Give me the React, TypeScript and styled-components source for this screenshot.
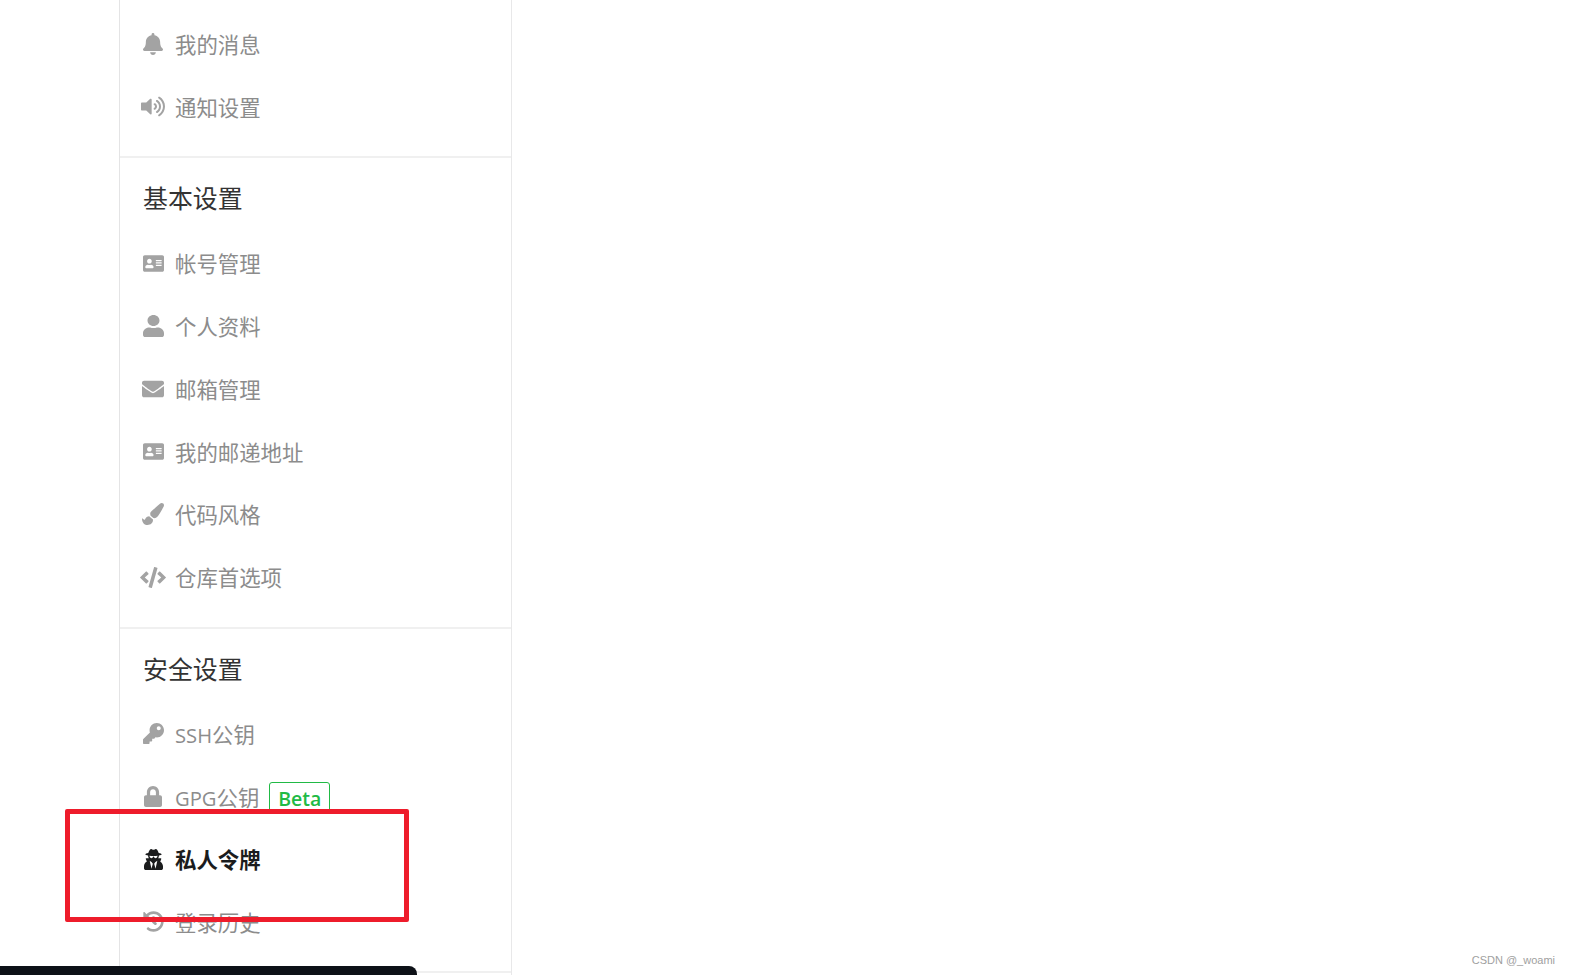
import React from "react";
import styled, { createGlobalStyle } from "styled-components";
import {
  FaBell,
  FaVolumeUp,
  FaAddressCard,
  FaUser,
  FaEnvelope,
  FaPaintBrush,
  FaCode,
  FaKey,
  FaLock,
  FaUserSecret,
  FaHistory,
} from "react-icons/fa";
import type { IconType } from "react-icons";

const GlobalStyle = createGlobalStyle`
  html, body {
    margin: 0;
    padding: 0;
    background: #fff;
    width: 1570px;
    height: 975px;
    overflow: hidden;
    font-family: "Open Sans", "Noto Sans CJK SC", sans-serif;
  }
`;

const Page = styled.div`
  position: relative;
  width: 1570px;
  height: 975px;
  overflow: hidden;
  padding-left: 119px;
  box-sizing: border-box;
  background: #fff;
`;

const Sidebar = styled.nav`
  width: 393px;
  height: 975px;
  box-sizing: border-box;
  border-left: 1px solid #e4e4e5;
  border-right: 1px solid #e8e8e9;
  padding-top: 13.6px;
`;

const Section = styled.section`
  border-bottom: 2px solid #f0f0f0;
  padding-bottom: 17px;
`;

const Heading = styled.h3`
  margin: 22px 0 18.6px 23px;
  font-family: "Noto Sans CJK SC", sans-serif;
  font-size: 24.9px;
  font-weight: 400;
  line-height: 34px;
  color: #333;
`;

const Row = styled.div<{ $active?: boolean }>`
  display: flex;
  align-items: center;
  box-sizing: border-box;
  height: 62.8px;
  padding: 0 0 2px 23px;
  color: ${(p) => (p.$active ? "#1b1c1d" : "#8c8c8c")};
`;

const IconBox = styled.span<{ $active?: boolean; $w: number; $h: number }>`
  display: flex;
  align-items: center;
  justify-content: center;
  width: 20px;
  margin-right: 12px;
  color: ${(p) => (p.$active ? "#1b1c1d" : "#a3a3a3")};

  svg {
    flex-shrink: 0;
    width: ${(p) => p.$w}px;
    height: ${(p) => p.$h}px;
  }
`;

const Label = styled.span<{ $active?: boolean; $latin?: boolean }>`
  font-family: "Noto Sans CJK SC", sans-serif;
  font-size: 21.4px;
  font-weight: ${(p) => (p.$active ? 700 : 400)};
  line-height: 30px;
  padding-top: ${(p) => (p.$latin ? "2px" : "0")};
  white-space: nowrap;
`;

const Latin = styled.span`
  font-family: "Open Sans", sans-serif;
  font-size: 20.2px;
`;

const Badge = styled.span`
  display: inline-flex;
  align-items: center;
  justify-content: center;
  box-sizing: border-box;
  width: 61px;
  height: 32px;
  margin: 4px 0 0 10px;
  border: 1px solid #21ba45;
  border-radius: 3px;
  color: #21ba45;
  font-family: "Open Sans", sans-serif;
  font-size: 19.5px;
  font-weight: 600;
`;

const Annotation = styled.div`
  position: absolute;
  left: 65px;
  top: 809px;
  width: 344px;
  height: 113px;
  box-sizing: border-box;
  border: 5px solid #ee1c2b;
  border-radius: 2px;
`;

const BottomBar = styled.div`
  position: absolute;
  left: 0;
  bottom: 0;
  width: 417px;
  height: 9px;
  background: #0d1117;
  border-radius: 0 8px 0 0;
`;

const Watermark = styled.div`
  position: absolute;
  right: 15px;
  top: 953px;
  font-family: "Liberation Sans", sans-serif;
  font-size: 11px;
  line-height: 14px;
  color: #a0a0a0;
`;

type Item = {
  icon: IconType;
  w: number;
  h: number;
  label: string;
  latin?: string;
  active?: boolean;
  beta?: boolean;
};

const first: Item[] = [
  { icon: FaBell, w: 20, h: 22, label: "我的消息" },
  { icon: FaVolumeUp, w: 24, h: 21, label: "通知设置" },
];

const basic: Item[] = [
  { icon: FaAddressCard, w: 21, h: 19, label: "帐号管理" },
  { icon: FaUser, w: 21, h: 22, label: "个人资料" },
  { icon: FaEnvelope, w: 22, h: 22, label: "邮箱管理" },
  { icon: FaAddressCard, w: 21, h: 19, label: "我的邮递地址" },
  { icon: FaPaintBrush, w: 22, h: 22, label: "代码风格" },
  { icon: FaCode, w: 26, h: 21, label: "仓库首选项" },
];

const security: Item[] = [
  { icon: FaKey, w: 21, h: 21, label: "公钥", latin: "SSH" },
  { icon: FaLock, w: 18, h: 21, label: "公钥", latin: "GPG", beta: true },
  { icon: FaUserSecret, w: 19, h: 21, label: "私人令牌", active: true },
  { icon: FaHistory, w: 21, h: 21, label: "登录历史" },
];

function Rows({ items }: { items: Item[] }) {
  return (
    <>
      {items.map((it) => (
        <Row key={(it.latin ?? "") + it.label} $active={it.active}>
          <IconBox $active={it.active} $w={it.w} $h={it.h}>
            <it.icon preserveAspectRatio="none" />
          </IconBox>
          <Label $active={it.active} $latin={!!it.latin}>
            {it.latin && <Latin>{it.latin}</Latin>}
            {it.label}
          </Label>
          {it.beta && <Badge>Beta</Badge>}
        </Row>
      ))}
    </>
  );
}

export default function App() {
  return (
    <Page>
      <GlobalStyle />
      <Sidebar>
        <Section>
          <Rows items={first} />
        </Section>
        <Section>
          <Heading>基本设置</Heading>
          <Rows items={basic} />
        </Section>
        <Section>
          <Heading>安全设置</Heading>
          <Rows items={security} />
        </Section>
      </Sidebar>
      <Annotation />
      <BottomBar />
      <Watermark>CSDN @_woami</Watermark>
    </Page>
  );
}
